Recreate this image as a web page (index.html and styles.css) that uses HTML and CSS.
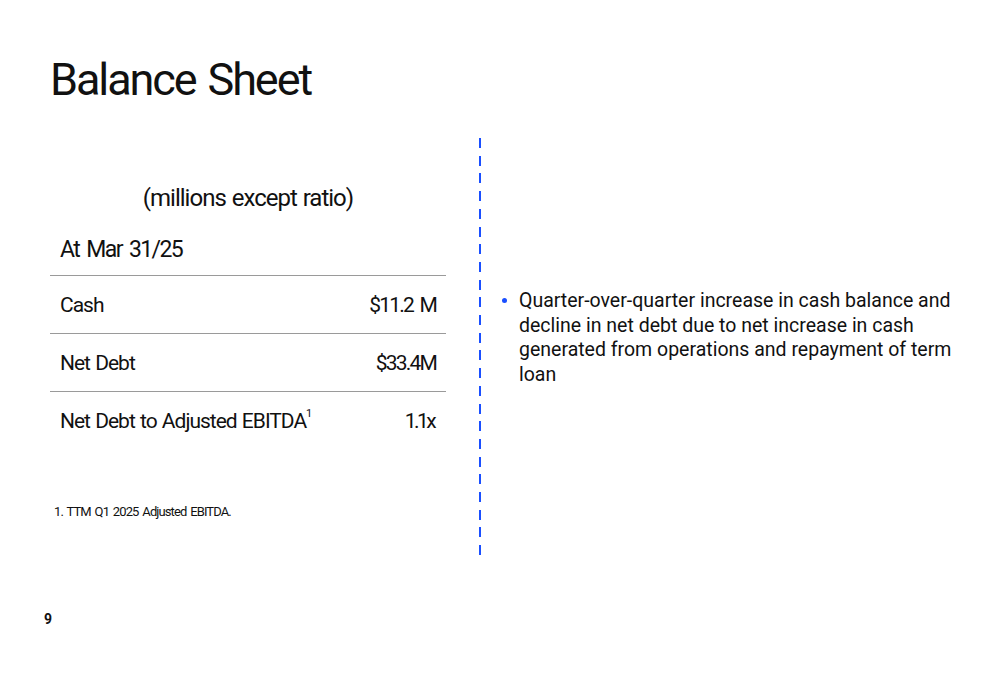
FILE: index.html
```html
<!DOCTYPE html>
<html>
<head>
<meta charset="utf-8">
<link rel="stylesheet" href="styles.css">
</head>
<body>
<div class="slide">
  <h1 class="title">Balance Sheet</h1>
  <div class="content">
    <div class="left">
      <div class="units">(millions except ratio)</div>
      <div class="asof">At Mar 31/25</div>
      <div class="row"><span>Cash</span><span class="num">$11.2 M</span></div>
      <div class="row"><span>Net Debt</span><span class="num">$33.4M</span></div>
      <div class="row last"><span>Net Debt to Adjusted EBITDA<sup>1</sup></span><span class="num ratio">1.1x</span></div>
      <div class="footnote">1. TTM Q1 2025 Adjusted EBITDA.</div>
    </div>
    <div class="divider"></div>
    <div class="right">
      <ul class="bullets">
        <li>Quarter-over-quarter increase in cash balance and decline in net debt due to net increase in cash generated from operations and repayment of term loan</li>
      </ul>
    </div>
  </div>
  <div class="pagenum">9</div>
</div>
</body>
</html>
```
FILE: styles.css
```css
* { box-sizing: border-box; }
html, body { margin: 0; padding: 0; background: #fff; }
body { font-family: Roboto, "Liberation Sans", sans-serif; color: #111; }
.slide { width: 1000px; height: 685px; position: relative; padding: 0; }
.title {
  margin: 0;
  padding: 55px 0 0 50px;
  font-size: 45px;
  font-weight: 400;
  letter-spacing: -2.1px;
  word-spacing: 3px;
  line-height: 50px;
}
.content { display: flex; margin-top: 33px; }
.left { width: 396px; margin-left: 50px; padding-top: 45px; }
.units { text-align: center; font-size: 24px; line-height: 30px; letter-spacing: -1px; word-spacing: 1px; }
.asof { font-size: 23px; line-height: 30px; padding: 22px 10px 10px; letter-spacing: -1.6px; word-spacing: 3px; border-bottom: 1.5px solid #9a9a9a; }
.row {
  display: flex; justify-content: space-between;
  font-size: 21px; height: 58px; align-items: center;
  padding: 0 10px;
  letter-spacing: -1px;
  word-spacing: 1px;
  border-bottom: 1.5px solid #9a9a9a;
}
.row .num { letter-spacing: -1.8px; word-spacing: 3px; }
.row .ratio { letter-spacing: -2.6px; padding-right: 2px; }
.row.last { border-bottom: none; }
.row sup { font-size: 11px; vertical-align: top; position: relative; top: -2px; }
.footnote { font-size: 13px; padding: 54px 0 0 4px; letter-spacing: -0.9px; word-spacing: 1.5px; }
.divider {
  width: 2px; height: 418px; margin-left: 33px;
  background: repeating-linear-gradient(to bottom, #1a4fff 0 10px, transparent 10px 17.7px);
}
.right { padding-top: 151px; padding-left: 20px; width: 500px; }
.bullets { margin: 0; padding: 0 0 0 18px; list-style: none; }
.bullets li { position: relative; font-size: 19.5px; line-height: 24.5px; }
.bullets li::before {
  content: ""; position: absolute; left: -17px; top: 9px;
  width: 5px; height: 5px; border-radius: 50%; background: #1a4fff;
}
.pagenum { position: absolute; left: 44px; top: 611px; font-size: 14px; font-weight: 700; }
```
